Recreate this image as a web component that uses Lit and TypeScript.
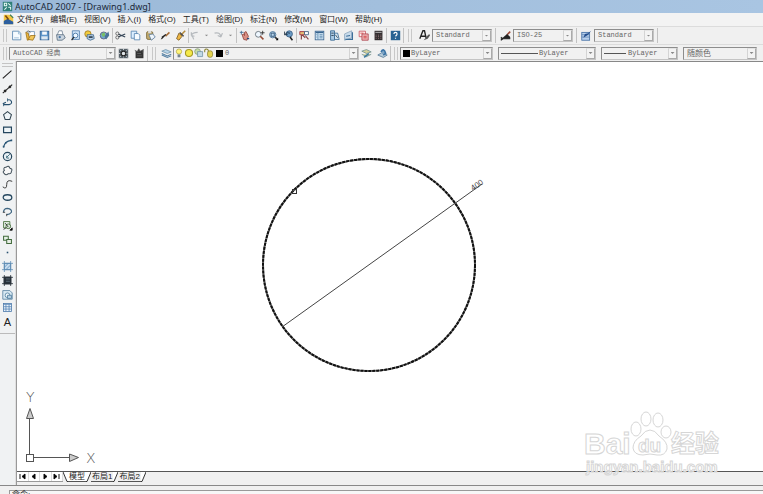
import { LitElement, html, css, svg, nothing, TemplateResult } from "lit";
import { customElement, property } from "lit/decorators.js";

const icons: Record<string, TemplateResult> = {
  app: svg`<rect x="1" y="1" width="12" height="12" fill="#2f7f78"/><path d="M3 3h3v3h-3zM8 3l3 3M3 11l3-3M8 8h3v3" stroke="#e9fbf6" fill="none" stroke-width="1.3"/>`,
  drawing: svg`<path d="M1 1h7l5 4v8H1z" fill="#f4c542"/><path d="M1 9l5-3 7 4v3H1z" fill="#2d5f9f"/><path d="M3 2l4 5" stroke="#7a4a12" stroke-width="2"/><path d="M9 1l4 4" stroke="#3c7a4a" stroke-width="1.500"/>`,
  blank: svg`<path d="M2 1.500h8l2.500 3v8H2z" fill="#f6fbff" stroke="#4f80ad"/><path d="M9.500 1.500v3.500h3M4 10h6" fill="none" stroke="#8fb2d0"/>`,
  open: svg`<path d="M5 2h7v8H5z" fill="#fff" stroke="#6b8fb0"/><path d="M1 3l3 1 2 8-3 1z" fill="#efb93c" stroke="#9a6e18"/><path d="M4 12l3-5h6l-3 6z" fill="#f3c75a" stroke="#9a6e18"/><path d="M2 2q3-2 5 1" fill="none" stroke="#555"/>`,
  save: svg`<rect x="1.500" y="1.500" width="11" height="11" fill="#5d96cb" stroke="#2c5d8f"/><rect x="4" y="2" width="6" height="4" fill="#f4f9fd"/><rect x="3" y="8" width="8" height="4" fill="#dce8f2"/>`,
  print: svg`<path d="M3 6L5 1h4l1 5" fill="#fff" stroke="#6e7f93"/><path d="M2 6h9l2 4-4 3H3z" fill="#cbd5df" stroke="#53677b"/><circle cx="6" cy="9" r="1.500" fill="#4873a0"/>`,
  preview: svg`<path d="M3 1h9v11H3z" fill="#cfe3f7" stroke="#4c7cae"/><circle cx="7" cy="7" r="3" fill="#eef7ff" stroke="#35699b"/><path d="M5 9l-3 4" stroke="#222" stroke-width="1.500"/>`,
  publish: svg`<circle cx="5" cy="5" r="4" fill="#f3cb3d" stroke="#9c7820"/><path d="M4 6h8l1 5-5 2-4-2z" fill="#b9d0e6" stroke="#375f87"/><path d="M6 9h5" stroke="#234" stroke-width="2"/>`,
  globe: svg`<circle cx="6" cy="7" r="4.500" fill="#71a6cf" stroke="#557"/><path d="M3 5l4-2 1 4-3 2z" fill="#7abf63"/><path d="M7 8l5-6 1 5-4 5z" fill="#4a7298"/>`,
  cut: svg`<path d="M4 5l9 4M4 9l9-4" stroke="#345" stroke-width="1.300"/><circle cx="3" cy="4.500" r="2" fill="none" stroke="#555"/><circle cx="3" cy="9.500" r="2" fill="none" stroke="#555"/>`,
  copy: svg`<path d="M1.500 1.500h7v9h-7z" fill="#dbeeff" stroke="#4f80ad"/><path d="M5.500 4.500h5l2 2v6h-7z" fill="#f6fbff" stroke="#4f80ad"/>`,
  paste: svg`<rect x="2" y="2" width="8" height="10" rx="2" fill="#bfa86b" stroke="#776535"/><rect x="4" y="1" width="4" height="3" fill="#ddd"/><path d="M5 6l5-1 3 4-5 4z" fill="#eef5fb" stroke="#58789a"/>`,
  brush: svg`<path d="M12 3L7 8" stroke="#a46a35" stroke-width="2"/><path d="M8 6L3 11l-2 1 2-4 4-3z" fill="#222"/>`,
  block: svg`<path d="M13 1L7 7" stroke="#b58a3a" stroke-width="2"/><path d="M5 4l4 4-4 5-3-2z" fill="#eeb744" stroke="#775316"/><path d="M6 3l5 5" stroke="#444" stroke-width="1.500"/>`,
  undo: svg`<path d="M3 7Q4 3 11 3M3 7V3M3 7l4 1M3 7q2 1 3 5" fill="none" stroke="#b5b9bd" stroke-width="1.500"/>`,
  redo: svg`<path d="M2 4Q9 2 10 9M10 9l-4-2M10 9l2-5" fill="none" stroke="#b5b9bd" stroke-width="1.500"/>`,
  down: svg`<path d="M5 6h4l-2 2z" fill="#888"/>`,
  pan: svg`<path d="M4 6l2-1 1 2V3l2-1 3 6-2 5-4-1z" fill="#d98e83" stroke="#8c3e38"/><path d="M1 3h5M3 1v5" stroke="#36638f" fill="none"/><path d="M10 11h3" stroke="#247" stroke-width="1.500"/>`,
  zoom: svg`<circle cx="5.500" cy="5.500" r="3.700" fill="#eef7ff" stroke="#58636d"/><path d="M8 8l4 4" stroke="#944a35" stroke-width="2"/><path d="M11 1v5M8.500 3.500h5" stroke="#222"/>`,
  zoomw: svg`<circle cx="6" cy="6" r="4" fill="#b8d7ef" stroke="#3e678d"/><path d="M9 9l3 3" stroke="#333" stroke-width="2"/><path d="M4 4h4v4H4z" fill="none" stroke="#246"/><path d="M13 10v3h-3z"/>`,
  zoomp: svg`<circle cx="8" cy="5" r="4" fill="#6c9cc6" stroke="#355c80"/><path d="M9 9l3 4" stroke="#222" stroke-width="2"/><path d="M2 6q3-4 7-2M2 6V2M2 6h4" stroke="#123" fill="none"/>`,
  props: svg`<path d="M1 2h6v4H1z" fill="#e4bc78" stroke="#923"/><path d="M7 2h5v4H7z" fill="#fff" stroke="#357"/><path d="M3 12V7h3M8 7l4 5M5 7l3 3" stroke="#844" stroke-width="1.500" fill="none"/>`,
  center: svg`<rect x="1.500" y="1.500" width="11" height="11" fill="#d7eaf8" stroke="#38648e"/><path d="M2 3h10" stroke="#38648e" stroke-width="2"/><path d="M5 4v8M7 6h4M7 8h4M7 10h4M3 6h1M3 9h1" stroke="#4d7ca5"/>`,
  palette: svg`<path d="M2 1h5v12H2z" fill="#a9c9e3" stroke="#2e618d"/><path d="M7 4h4l2 8H7z" fill="#d8eaf5" stroke="#2e618d"/><path d="M3 4h3M3 7h3M8 6l3 4" stroke="#234"/>`,
  sheet: svg`<path d="M2 5l9-4v9l-9 3z" fill="#c8dbeb" stroke="#8aa5bd"/><path d="M4 8l5-1M3 12h9V3" stroke="#3d6f9a" fill="none" stroke-width="1.500"/>`,
  markup: svg`<path d="M1.500 1.500h8v7h-8z" fill="#fff0f0" stroke="#c64d55"/><path d="M5 5h8v8H5z" fill="#efb5b7" stroke="#a94049"/><path d="M3 4h4M7 8h4M7 10h4" stroke="#c33"/>`,
  calc: svg`<rect x="2" y="1" width="10" height="12" fill="#332e30"/><path d="M3 3h8" stroke="#d8d8d8"/><path d="M4 6v6M7 6v6M10 6v6" stroke="#bb9292" stroke-dasharray="1 1"/>`,
  help: svg`<rect x="1" y="1" width="12" height="12" fill="#286392"/><path d="M5 5q0-2 2-2t2 2q0 1-2 3M7 10v1" stroke="#fff" stroke-width="1.500" fill="none"/>`,
  textstyle: svg`<path d="M1 11L5 1h2l2 9M3 8h5" fill="none" stroke="#222" stroke-width="1.700"/><path d="M13 5l-3 3-4 5 5-2 3-4z" fill="#555"/>`,
  dimstyle: svg`<path d="M1 11h12M1 9l3 2-3 2" stroke="#222" stroke-width="1.300" fill="none"/><path d="M13 2L9 6" stroke="#943" stroke-width="2"/><path d="M9 5l4 4v2H2z" fill="#222"/>`,
  tablestyle: svg`<rect x="1" y="3" width="10" height="10" fill="#b9d0ec" stroke="#3a68a0"/><path d="M1 6h10M1 9h10" stroke="#5a82b0"/><path d="M13 1L9 6l-6 4 2-5 4-1z" fill="#234c8c"/>`,
  gear: svg`<path d="M1 1h12v12H1z" fill="#566068"/><path d="M2 2l10 10M12 2L2 12M7 1v12M1 7h12" stroke="#e4eaed" stroke-dasharray="2 1"/><circle cx="7" cy="7" r="3" fill="#dfe4e7" stroke="#222" stroke-width="1.500"/>`,
  workspace: svg`<path d="M2 4h10v9H2z" fill="#333"/><path d="M1 3l3 2 2-4 2 3 4-2-1 4" fill="#333" stroke="#555"/><path d="M4 7h5M4 10h6" stroke="#666"/>`,
  layers: svg`<path d="M1 4l5-2 7 3-5 2z" fill="#b7d4e8" stroke="#6f91aa"/><path d="M1 7l7 3 5-2M1 9l7 3 5-2" stroke="#527fa3" stroke-width="1.300" fill="none"/>`,
  bulb: svg`<circle cx="7" cy="5" r="3.700" fill="#fff47a" stroke="#aaa13b"/><path d="M5 9h4v4H5z" fill="#77858f"/>`,
  sun: svg`<circle cx="7" cy="7" r="5" fill="#f5e948" stroke="#a59924" stroke-width="1.500"/>`,
  viewport: svg`<circle cx="5" cy="5" r="4" fill="#c7dda8" stroke="#7f9870"/><path d="M5 5h7v7H5z" fill="#c2d9e7" stroke="#6a8da3"/>`,
  lock: svg`<path d="M1 6V3q2-3 5 0v3" fill="none" stroke="#8c8531" stroke-width="1.500"/><rect x="5" y="4" width="7" height="9" rx="3" fill="#e3d351" stroke="#877e2b"/>`,
  layerprev: svg`<path d="M1 4l6-2 6 3-6 2zM1 8l6 3 6-3" fill="#d4d19b" stroke="#6f8f90"/><path d="M4 12l6-5" stroke="#3678a0" stroke-width="2"/>`,
  layerstate: svg`<path d="M1 9l7 3 5-3-7-3z" fill="#b7ccda" stroke="#527895"/><path d="M5 5q4-6 6 2L8 9" stroke="#3b74a6" stroke-width="2" fill="#7fa5c5"/>`,
  line: svg`<path d="M1 12L12 2" stroke="#222" stroke-width="1.400"/>`,
  xline: svg`<path d="M1 13L13 2" stroke="#222" stroke-width="1.400"/><path d="M3 11l2-2M9 6l2-2" stroke="#222" stroke-width="3"/>`,
  pline: svg`<path d="M2 11h7q4-1 3-4t-5-2M1 10l4-2" fill="none" stroke="#28516f" stroke-width="1.400"/><path d="M2 9v4M7 3v4" stroke="#28516f"/>`,
  polygon: svg`<path d="M7 2l5 4-2 6H4L2 6z" fill="#eef4f7" stroke="#30434f" stroke-width="1.300"/>`,
  rect: svg`<path d="M2 4h10v7H2z" fill="#eef4f7" stroke="#24465e" stroke-width="1.500"/>`,
  arc: svg`<path d="M2 12Q3 4 12 3" fill="none" stroke="#285575" stroke-width="1.500"/><path d="M1 11h2M11 3h2M4 6h2" stroke="#285575" stroke-width="2"/>`,
  circle: svg`<circle cx="7" cy="7" r="5.300" fill="#e8f0f5" stroke="#25455c" stroke-width="1.500"/><path d="M6 8l4-4M6 6v3h3" stroke="#256" fill="none"/>`,
  cloud: svg`<path d="M5 3q4-3 5 1 4 1 2 4 0 4-4 3-3 3-5 0-3-2 0-4-2-4 2-4z" fill="#f8f8f8" stroke="#43525c" stroke-width="1.300"/>`,
  spline: svg`<path d="M1 10q5 4 5-3t7-4" fill="none" stroke="#333" stroke-width="1.200"/>`,
  ellipse: svg`<ellipse cx="7" cy="7" rx="5.500" ry="3.500" fill="#eef4f7" stroke="#24465e" stroke-width="1.600"/>`,
  ellarc: svg`<path d="M2 8q0-5 5-5 6 1 5 5-2 3-6 3" fill="none" stroke="#3f6682" stroke-width="1.500"/><path d="M1 8h3M6 10v3" stroke="#222"/>`,
  insert: svg`<path d="M2 2h8v8H2z" fill="#e5f0e5" stroke="#37642b"/><circle cx="8" cy="8" r="3" fill="#dce8dc" stroke="#37642b"/><path d="M4 4l4 5M13 10v3h-3zM5 10l-3 2" stroke="#111"/>`,
  make: svg`<path d="M2 3h6v5H2z" fill="#e5f0e5" stroke="#426b3c" stroke-width="1.300"/><path d="M6 7h6v5H6z" fill="#e7eee5" stroke="#426b3c" stroke-width="1.300"/>`,
  point: svg`<rect x="6" y="6" width="2" height="2" fill="#28516f"/>`,
  hatch: svg`<path d="M3 3h8v8H3z" fill="#c7ddf0" stroke="#3f719e"/><path d="M3 0v14M11 0v14M0 3h14M0 11h14M3 8l5-5M5 11l6-6" stroke="#5e8cb4" fill="none"/>`,
  gradient: svg`<path d="M2 2h10v10H2z" fill="#29323a"/><path d="M3 0v14M11 0v14M0 3h14M0 11h14" stroke="#29323a"/><path d="M5 5h5M5 8h5" stroke="#637583"/>`,
  region: svg`<path d="M1 2h9l3 3v8H1z" fill="#d8e9f3" stroke="#537d9d"/><circle cx="7" cy="8" r="3" fill="#eff7fb" stroke="#4b7b9c"/><path d="M7 8h5v4H7z" fill="#b8d2e5" stroke="#4b7b9c"/>`,
  table: svg`<rect x="2" y="2" width="10" height="10" fill="#eaf3fb" stroke="#4c78aa"/><path d="M2 3h10M2 6h10M2 9h10M5 3v9M9 3v9" stroke="#5683b5"/>`,
};

const pic = (name: string) => svg`<svg class="icon" viewBox="0 0 14 14" aria-hidden="true">${icons[name]}</svg>`;

@customElement("cad-combo")
class CadCombo extends LitElement {
  @property() label = "";
  @property() value = "";
  @property() kind = "";

  static styles = css`
    :host { display: grid; height: 13px; min-width: 0; box-sizing: border-box; border: 1px solid #8d8d8d; border-right-color: #c4c4c4; border-bottom-color: #c4c4c4; background: #f1f1f1; }
    .field, .content, .arrow { grid-area: 1 / 1; }
    .field { appearance: none; width: 100%; min-width: 0; height: 11px; margin: 0; padding: 0 10px 0 3px; border: 0; border-radius: 0; background: transparent; color: #666; font: 7px/11px "Liberation Mono", "Noto Sans CJK SC", monospace; }
    .field.color { padding-left: 10px; }
    .field.layer { padding-left: 51px; }
    .field.long { padding-left: 40px; }
    .field.short { padding-left: 26px; }
    .field.cjk { font-size: 8px; }
    .content { display: flex; align-items: center; pointer-events: none; }
    .icon { width: 10px; height: 10px; flex: none; }
    .swatch { width: 7px; height: 7px; background: #000; margin-left: 2px; }
    .stroke { height: 1px; background: #555; margin-left: 2px; }
    .stroke.long { width: 37px; }
    .stroke.short { width: 22px; }
    .arrow { justify-self: end; width: 9px; height: 11px; box-sizing: border-box; border: 1px solid #aaa; border-top-color: #e4e4e4; border-left-color: #d4d4d4; background: #f3f3f3; display: grid; place-items: center; pointer-events: none; }
    .tip { width: 4px; height: 2px; background: #888; clip-path: polygon(0 0, 100% 0, 50% 100%); }
  `;

  render() {
    return html`
      <select class="field ${this.kind}" aria-label=${this.label}><option>${this.value}</option></select>
      <span class="content">
        ${this.kind === "layer" ? ["bulb", "sun", "viewport", "lock"].map(pic) : nothing}
        ${this.kind === "layer" || this.kind === "color" ? html`<span class="swatch"></span>` : nothing}
        ${this.kind === "long" || this.kind === "short" ? html`<span class="stroke ${this.kind}"></span>` : nothing}
      </span>
      <span class="arrow"><span class="tip"></span></span>`;
  }
}

@customElement("app-root")
class AppRoot extends LitElement {
  static styles = css`
    :host { display: flex; flex-direction: column; height: 100vh; overflow: hidden; background: #f0f0f0; color: #222; font: 8px/14px "Liberation Sans", "Noto Sans CJK SC", sans-serif; }
    .icon { display: block; width: 11px; height: 11px; flex: none; }
    button { appearance: none; border: 0; padding: 0; margin: 0; background: transparent; color: inherit; font: inherit; display: grid; place-items: center; min-width: 0; }
    .title { flex: none; height: 13px; display: flex; align-items: center; gap: 2px; padding-left: 2px; background: linear-gradient(90deg, #9bb9d8, #a9c5e2); color: #1b2939; }
    .title h1 { margin: 0; font: 9px/13px "Noto Sans", sans-serif; }
    .menu { flex: none; height: 13px; display: flex; align-items: center; gap: 7px; padding-left: 3px; background: #f3f3f3; }
    .menu .icon { margin-right: -4px; }
    .bar { flex: none; height: 18px; display: flex; align-items: center; border-top: 1px solid #dcdcdc; box-sizing: border-box; }
    .bar.second { height: 17px; }
    .group { height: 15px; display: flex; align-items: center; border-right: 1px solid #c2c2c2; box-sizing: border-box; }
    .group button { flex: 1; }
    .w14 { width: 14px; } .w17 { width: 17px; } .w32 { width: 32px; } .w44 { width: 44px; }
    .w48 { width: 48px; } .w60 { width: 60px; } .w76 { width: 76px; } .w90 { width: 90px; }
    .grip { flex: none; width: 2px; height: 13px; border: solid #c8c8c8; border-width: 0 1px; margin: 0 2px 0 3px; }
    .grip.wide { margin-right: 3px; margin-left: 4px; }
    .style { height: 15px; width: 81px; padding: 0 3px; display: grid; grid-template-columns: 12px 1fr; gap: 2px; align-items: center; box-sizing: border-box; border-right: 1px solid #c2c2c2; }
    .workspace { width: 107px; } .layer { width: 186px; } .color { width: 93px; }
    .linetype { width: 98px; } .weight { width: 77px; } .plot { width: 74px; }
    .second cad-combo + cad-combo { margin-left: 5px; }
    .main { flex: 1; min-height: 0; display: grid; grid-template-columns: 16px 1fr; }
    .tools { background: #f0f2f3; border-right: 1px solid #e0e0e0; box-sizing: border-box; }
    .toolgrip { height: 2px; margin: 2px; border: solid #c4c4c4; border-width: 1px 0; }
    .toollist { height: 259px; display: flex; flex-direction: column; justify-content: space-between; align-items: center; padding-bottom: 5px; border-bottom: 1px solid #bbb; }
    .letter { font: 11px/12px "Liberation Sans", sans-serif; }
    .work { position: relative; display: flex; flex-direction: column; min-width: 0; border-left: 1px solid #999; border-top: 1px solid #888; }
    .canvas { position: relative; flex: 1; background: #fff; overflow: hidden; border-bottom: 1px solid #555; }
    .drawing { position: absolute; left: 233px; top: 88px; width: 260px; height: 240px; }
    .ucs { position: absolute; left: 3px; bottom: 4px; width: 80px; height: 84px; }
    .mark { position: absolute; right: 34px; bottom: 0; width: 150px; height: 80px; pointer-events: none; }
    .tabs { flex: none; height: 13px; display: flex; align-items: flex-start; }
    .nav { display: flex; background: #fff; width: 46px; height: 9px; border-bottom: 1px solid #999; }
    .nav button { flex: 1; border-right: 1px solid #ddd; }
    .nav svg { width: 7px; height: 7px; display: block; }
    .sheets { display: flex; height: 10px; line-height: 9px; }
    .slant { width: 5px; height: 10px; display: block; }
    .sheets button { height: 10px; padding: 0 1px; border-bottom: 1px solid #555; color: #222; }
    .sheets .on { background: #fff; }
    .command { flex: none; height: 9px; display: flex; border-top: 1px solid #888; padding-top: 4px; padding-left: 9px; box-sizing: border-box; overflow: hidden; }
    .log { flex: 1; height: 12px; border: 1px solid #999; border-right: 0; padding-left: 2px; line-height: 8px; background: #f7f7f7; }
  `;

  private group(width: string, names: string[]) {
    return html`<div class="group ${width}">${names.map((n) => html`<button aria-label=${n}>${pic(n)}</button>`)}</div>`;
  }

  private styleBox(icon: string, label: string, value: string) {
    return html`<div class="style"><button aria-label=${label}>${pic(icon)}</button><cad-combo label=${label} value=${value}></cad-combo></div>`;
  }

  render() {
    const menus = ["文件(F)", "编辑(E)", "视图(V)", "插入(I)", "格式(O)", "工具(T)", "绘图(D)", "标注(N)", "修改(M)", "窗口(W)", "帮助(H)"];
    const tools = ["line", "xline", "pline", "polygon", "rect", "arc", "circle", "cloud", "spline", "ellipse", "ellarc", "insert", "make", "point", "hatch", "gradient", "region", "table"];
    const rising = svg`<svg class="slant" viewBox="0 0 5 10"><path d="M0 0h5L1 10H0z" fill="#fff"/><path d="M5 0L1 9.500H0" fill="none" stroke="#333"/></svg>`;
    return html`
      <header class="title">${pic("app")}<h1>AutoCAD 2007 - [Drawing1.dwg]</h1></header>
      <nav class="menu">${pic("drawing")}${menus.map((m) => html`<button>${m}</button>`)}</nav>
      <div class="bar">
        <span class="grip"></span>
        ${this.group("w44", ["blank", "open", "save"])}
        ${this.group("w60", ["print", "preview", "publish", "globe"])}
        ${this.group("w76", ["cut", "copy", "paste", "brush", "block"])}
        ${this.group("w48", ["undo", "down", "redo", "down"])}
        ${this.group("w60", ["pan", "zoom", "zoomw", "zoomp"])}
        ${this.group("w90", ["props", "center", "palette", "sheet", "markup", "calc"])}
        ${this.group("w17", ["help"])}
        <span class="grip wide"></span>
        ${this.styleBox("textstyle", "文字样式", "Standard")}
        ${this.styleBox("dimstyle", "标注样式", "ISO-25")}
        ${this.styleBox("tablestyle", "表格样式", "Standard")}
      </div>
      <div class="bar second">
        <span class="grip"></span>
        <cad-combo class="workspace" label="工作空间" value="AutoCAD 经典"></cad-combo>
        ${this.group("w32", ["gear", "workspace"])}
        <span class="grip wide"></span>
        <button class="w14" aria-label="图层">${pic("layers")}</button>
        <cad-combo class="layer" kind="layer" label="图层" value="0"></cad-combo>
        ${this.group("w32", ["layerprev", "layerstate"])}
        <span class="grip"></span>
        <cad-combo class="color" kind="color" label="颜色" value="ByLayer"></cad-combo>
        <cad-combo class="linetype" kind="long" label="线型" value="ByLayer"></cad-combo>
        <cad-combo class="weight" kind="short" label="线宽" value="ByLayer"></cad-combo>
        <cad-combo class="plot" kind="cjk" label="打印样式" value="随颜色"></cad-combo>
      </div>
      <main class="main">
        <aside class="tools">
          <div class="toolgrip"></div>
          <div class="toollist">
            ${tools.map((t) => html`<button aria-label=${t}>${pic(t)}</button>`)}
            <button class="letter">A</button>
          </div>
        </aside>
        <section class="work">
          <div class="canvas">
            <svg class="drawing" viewBox="250 150 260 240">
              <circle cx="369" cy="265" r="106" fill="none" stroke="#777" stroke-width="2"/>
              <circle cx="369" cy="265" r="106" fill="none" stroke="#111" stroke-width="2" stroke-dasharray="3 1"/>
              <path d="M282 327L482 184" stroke="#444" stroke-width="1"/>
              <rect x="292.500" y="189.500" width="4" height="4" fill="none" stroke="#333"/>
              <text transform="translate(473 191) rotate(-35)" font-family="Liberation Sans, sans-serif" font-size="8" fill="#444">400</text>
            </svg>
            <svg class="ucs" viewBox="20 383 80 84">
              <g fill="none" stroke="#555">
                <path d="M29.500 454v-35M34 457.500h35"/>
                <rect x="26.500" y="454.500" width="7" height="7" fill="#fff"/>
                <path d="M26.500 418.500l3.500-10 3.500 10zM69.500 454l9 3.500-9 4z" fill="#ccc"/>
              </g>
              <text x="26" y="402" font-family="DejaVu Sans" font-weight="200" font-size="14" fill="#555">Y</text>
              <text x="86" y="463" font-family="DejaVu Sans" font-weight="200" font-size="14" fill="#555">X</text>
            </svg>
          </div>
          <div class="tabs">
            <div class="nav">
              ${[["首页", "M1 1v5M6 1v5L3 3.500z"], ["上一页", "M5 1v5L2 3.500z"], ["下一页", "M2 1v5L5 3.500z"], ["末页", "M6 1v5M1 1v5L4 3.500z"]].map(
                ([l, d]) => html`<button aria-label=${l}><svg viewBox="0 0 7 7"><path d=${d} stroke="#111"/></svg></button>`
              )}
            </div>
            <div class="sheets">
              <svg class="slant" viewBox="0 0 5 10"><path d="M0 0l4 10h1V0z" fill="#fff"/><path d="M0 0l4 9.500h1" fill="none" stroke="#333"/></svg>
              <button class="on">模型</button>${rising}
              <button>布局1</button>${rising}
              <button>布局2</button>${rising}
            </div>
          </div>
          <svg class="mark" viewBox="579 405 150 80" fill="#fff" stroke="#d6d6d6">
            <g font-family="Liberation Sans, Noto Sans CJK SC, sans-serif" font-weight="700">
              <text x="584" y="454" font-size="30">Bai</text>
              <path d="M650 430q5 0 9 6 9 6 8 13-2 7-10 6-7-2-14 0-9 0-10-7 0-7 8-12 4-6 9-6z"/>
              <ellipse cx="636" cy="429" rx="5" ry="7"/><ellipse cx="646" cy="419" rx="5" ry="7"/>
              <ellipse cx="658" cy="420" rx="5" ry="7"/><ellipse cx="666" cy="432" rx="5" ry="6"/>
              <text x="638" y="452" font-size="19">du</text>
              <text x="671" y="452" font-size="24">经验</text>
              <text x="586" y="472" font-size="15" fill-opacity="0.600">jingyan.baidu.com</text>
            </g>
          </svg>
        </section>
      </main>
      <footer class="command"><div class="log">命令:</div></footer>`;
  }
}
